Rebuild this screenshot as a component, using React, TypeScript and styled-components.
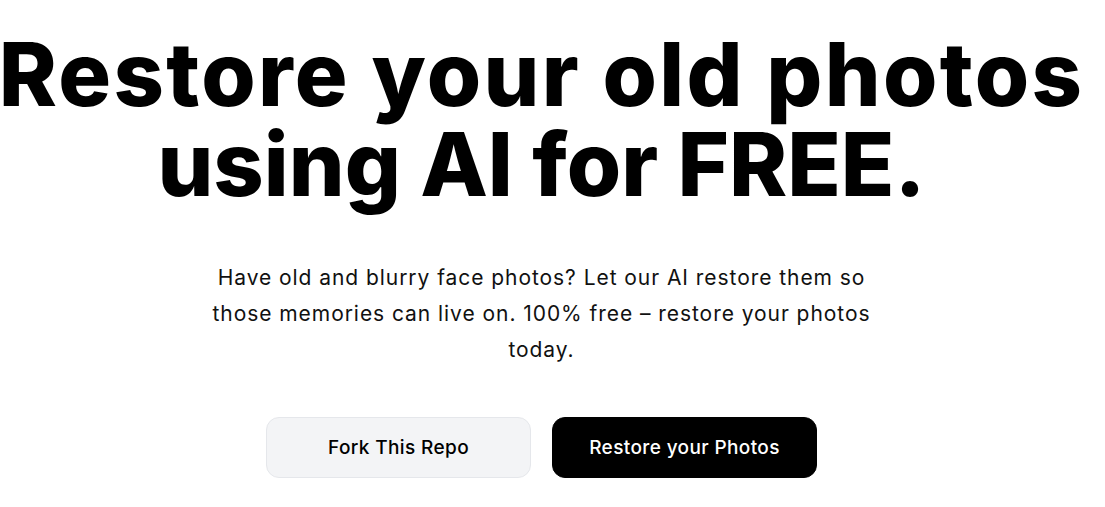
import styled, { createGlobalStyle } from 'styled-components';

const GlobalStyle = createGlobalStyle`
    html, body {
        margin: 0;
        padding: 0;
        background: #ffffff;
    }
    body {
        font-family: Inter, "Liberation Sans", sans-serif;
        color: #000000;
    }
`;

const Main = styled.main`
    box-sizing: border-box;
    width: 100%;
    padding: 29px 22px 0 0;
    display: flex;
    flex-direction: column;
    align-items: center;
    text-align: center;
`;

const Title = styled.h1`
    margin: 0;
    font-family: Inter, "Liberation Sans", sans-serif;
    font-size: 88px;
    font-weight: 800;
    line-height: 90px;
    white-space: nowrap;
`;

// the two heading lines are tracked apart so each keeps the reference width
const TitleLine = styled.span<{ $tracking: number }>`
    display: block;
    letter-spacing: ${p => p.$tracking}em;
`;

const Lead = styled.p`
    margin: 51px 0 0 0;
    max-width: 690px;
    font-size: 21px;
    line-height: 36px;
    font-weight: 400;
    letter-spacing: 0.045em;
    color: #111111;
`;

const Actions = styled.div`
    margin-top: 49px;
    display: flex;
    gap: 21px;
`;

const Button = styled.a<{ $dark?: boolean }>`
    box-sizing: border-box;
    width: 265px;
    height: 61px;
    display: flex;
    align-items: center;
    justify-content: center;
    border-radius: 13px;
    font-size: 19px;
    font-weight: 500;
    letter-spacing: 0.02em;
    text-decoration: none;
    cursor: pointer;
    background: ${p => (p.$dark ? '#000000' : '#f3f4f6')};
    color: ${p => (p.$dark ? '#ffffff' : '#000000')};
    border: 1px solid ${p => (p.$dark ? '#000000' : '#e5e7eb')};
`;

export default function App() {
    return (
        <>
            <GlobalStyle />
            <Main>
                <Title>
                    <TitleLine $tracking={0.026}>Restore your old photos</TitleLine>
                    <TitleLine $tracking={0}>using AI for FREE.</TitleLine>
                </Title>
                <Lead>
                    Have old and blurry face photos? Let our AI restore them so those memories can live on. 100% free – restore your photos today.
                </Lead>
                <Actions>
                    <Button>Fork This Repo</Button>
                    <Button $dark>Restore your Photos</Button>
                </Actions>
            </Main>
        </>
    );
}
